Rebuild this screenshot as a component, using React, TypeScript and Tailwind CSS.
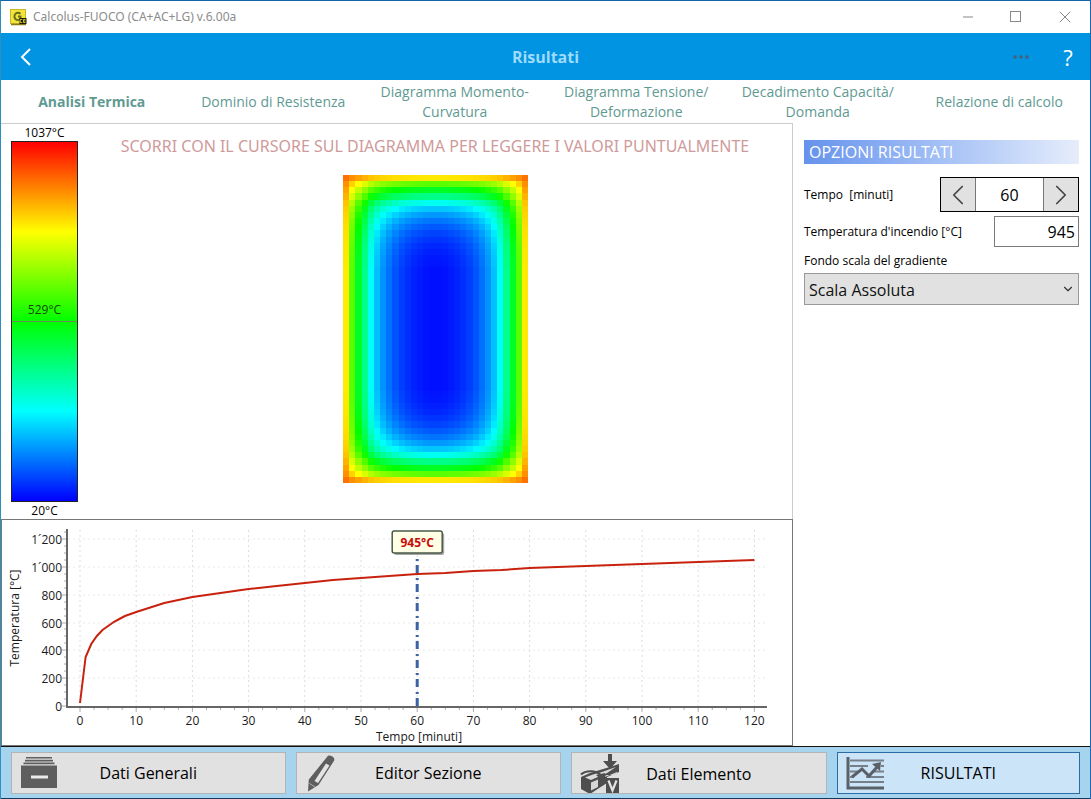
import React, { useState } from 'react';
import { Minus, Square, X, ChevronLeft, ChevronRight, ChevronDown } from 'lucide-react';
import clsx from 'clsx';

const TABS = [
  'Analisi Termica',
  'Dominio di Resistenza',
  'Diagramma Momento-Curvatura',
  'Diagramma Tensione/ Deformazione',
  'Decadimento Capacità/ Domanda',
  'Relazione di calcolo',
];

// ISO 834 standard fire curve
const fireTemp = (t: number) => 20 + 345 * Math.log10(8 * t + 1);

const AppIcon = () => (
  <svg width="17" height="17" viewBox="0 0 17 17" fill="none">
    <rect x="0.5" y="0.5" width="15" height="14" fill="#f3e33c" stroke="#c9b62a" />
    <path d="M1 15.500h15" stroke="#8a7a14" strokeWidth="1.500" />
    <path d="M10.500 4.800A3.600 3.600 0 1 0 10.500 10V7.500H8" stroke="#66701c" strokeWidth="2" />
    <rect x="9.500" y="9" width="7" height="6" fill="#1c1a08" />
    <path d="M12.300 10.500h-2v3h2M15.500 10.500h-2v3h2M13.500 12h2" stroke="#f3e33c" strokeWidth="0.800" />
  </svg>
);

const TitleBar: React.FC = () => (
  <div className="h-8 pl-[9px] flex items-center bg-white">
    <AppIcon />
    <h1 className="ml-[6px] flex-1 font-['Noto_Sans','Open_Sans',sans-serif] text-[12px] text-[#8c8c8c]">
      Calcolus-FUOCO (CA+AC+LG) v.6.00a
    </h1>
    <button aria-label="Riduci" className="w-12 h-full flex items-center justify-center text-[#888]">
      <Minus size={16} strokeWidth={1.5} />
    </button>
    <button aria-label="Ingrandisci" className="w-12 h-full flex items-center justify-center text-[#888]">
      <svg width="12" height="12" viewBox="0 0 12 12" fill="none" stroke="currentColor">
        <rect x="0.5" y="0.5" width="10" height="10" />
      </svg>
    </button>
    <button aria-label="Chiudi" className="w-[50px] h-full flex items-center justify-center text-[#888]">
      <X size={20} strokeWidth={1.2} />
    </button>
  </div>
);

const Header: React.FC = () => (
  <header className="h-[47px] bg-[#0094e2] grid grid-cols-[1fr_auto_1fr] items-center">
    <button aria-label="Indietro" className="w-[50px] h-full flex items-center justify-center text-white">
      <svg width="12" height="20" viewBox="0 0 12 20" fill="none" stroke="currentColor" strokeWidth="2">
        <path d="M10 2 2 10l8 8" />
      </svg>
    </button>
    <h2 className="text-[16px] font-bold text-[#9edbfc]">Risultati</h2>
    <div className="flex justify-end items-center h-full pr-3">
      <button aria-label="Altro" className="w-[46px] flex justify-start text-[#4a5f78]">
        <svg width="18" height="4" viewBox="0 0 18 4" fill="currentColor">
          <circle cx="3" cy="2" r="1.8" />
          <circle cx="9" cy="2" r="1.8" />
          <circle cx="15" cy="2" r="1.8" />
        </svg>
      </button>
      <button aria-label="Aiuto" className="w-[20px] text-[22px] leading-none font-medium text-white">?</button>
    </div>
  </header>
);

// gradient stops: blue, cyan, green, yellow, red
const heatColor = (f: number) => {
  const v = Math.max(0, Math.min(1, f)) * 4;
  const c = (n: number) => Math.round(n * 255);
  if (v < 1) return `rgb(0,${c(v)},255)`;
  if (v < 2) return `rgb(0,255,${c(2 - v)})`;
  if (v < 3) return `rgb(${c(v - 2)},255,0)`;
  return `rgb(255,${c(4 - v)},0)`;
};

const PROFILE = [0.77, 0.585, 0.46, 0.36, 0.255, 0.185, 0.14, 0.105, 0.078, 0.056, 0.04, 0.028, 0.02, 0.013, 0.01];
const COLS = 30;
const ROWS = 50;
const FIRE = 0.91;

const depth = (i: number, n: number) => (PROFILE[Math.min(i, n - 1 - i)] ?? 0.005) / FIRE;

const HeatMap: React.FC = () => (
  <svg width="185" height="308" viewBox="0 0 30 50" preserveAspectRatio="none" shapeRendering="crispEdges">
    {Array.from({ length: ROWS * COLS }, (_, k) => {
      const x = k % COLS;
      const y = Math.floor(k / COLS);
      const f = FIRE * (1 - (1 - depth(x, COLS)) * (1 - depth(y, ROWS)));
      return <rect key={k} x={x} y={y} width="1" height="1" fill={heatColor(f)} />;
    })}
  </svg>
);

const ScaleBar: React.FC = () => (
  <div className="w-[67px] flex flex-col items-center text-[12px] leading-[17px] text-black">
    <span>1037°C</span>
    <div className="w-full h-[361px] border border-[#222] flex flex-col bg-[linear-gradient(to_bottom,#f00,#ff0_25%,#0f0_50%,#0ff_75%,#00f)]">
      <div className="h-1/2 flex items-end justify-center border-b border-[#6b8a5a] pb-[3px] text-[#16480a]">529°C</div>
    </div>
    <span>20°C</span>
  </div>
);

const px = (t: number) => 78 + t * 5.62;
const py = (temp: number) => Math.round(186 - (temp / 1200) * 167);

const CURVE = [0, 1, 2, 3, 4, 5, 6, 7, 8, 9, 10, 15, 20, 25, 30, 35, 40, 45, 50, 55, 60, 65, 70, 75, 80, 85, 90, 95, 100, 105, 110, 115, 120];
const X_TICKS = Array.from({ length: 13 }, (_, i) => i * 10);
const Y_TICKS = [0, 200, 400, 600, 800, 1000, 1200];

const FireChart: React.FC<{ minutes: number }> = ({ minutes }) => {
  const cursor = px(minutes);
  return (
    <svg viewBox="0 0 790 225" className="w-full block text-[12px]" fill="#1a1a1a">
      <g stroke="#dcdcdc" strokeDasharray="2 3">
        {X_TICKS.map((t) => (
          <line key={t} x1={px(t)} x2={px(t)} y1="10" y2="186" />
        ))}
        {Y_TICKS.slice(1).map((v) => (
          <line key={v} x1="66" x2="765" y1={py(v)} y2={py(v)} stroke="#e9e9e9" />
        ))}
      </g>
      <g stroke="#aaa">
        {Array.from({ length: 49 }, (_, i) => (
          <line key={i} x1={px(i * 2.5)} x2={px(i * 2.5)} y1="187" y2={i % 4 ? 190 : 192} />
        ))}
        {Array.from({ length: 26 }, (_, i) => (
          <line key={i} x1={i % 4 ? 62 : 60} x2="65" y1={py(i * 50)} y2={py(i * 50)} />
        ))}
      </g>
      <path d="M65 9V187H765" fill="none" stroke="#666" strokeWidth="2" />
      {X_TICKS.map((t) => (
        <text key={t} x={px(t)} y="205" textAnchor="middle">{t}</text>
      ))}
      {Y_TICKS.map((v) => (
        <text key={v} x="60" y={py(v) + 5} textAnchor="end">
          {v >= 1000 ? `1´${String(v - 1000).padStart(3, '0')}` : v}
        </text>
      ))}
      <text x="417" y="221" textAnchor="middle">Tempo [minuti]</text>
      <text transform="translate(17 98) rotate(-90)" textAnchor="middle">Temperatura [°C]</text>
      <line x1={cursor} x2={cursor} y1="34" y2="186" stroke="#3a62a4" strokeWidth="3" strokeDasharray="8 5 2 4" strokeDashoffset="8" />
      <polyline
        points={CURVE.map((t) => `${px(t)},${py(fireTemp(t))}`).join(' ')}
        fill="none"
        stroke="#c8220e"
        strokeWidth="2"
      />
      <rect x={cursor - 23} y="13" width="50" height="22" rx="2" fill="#a8a8a8" />
      <rect x={cursor - 25} y="11" width="50" height="22" rx="2" fill="#ffffe6" stroke="#4a5a4a" strokeWidth="1.5" />
      <text x={cursor} y="27" textAnchor="middle" fontWeight="bold" fill="#c80a0a">
        {Math.round(fireTemp(minutes))}°C
      </text>
    </svg>
  );
};

const OptionsPanel: React.FC<{ minutes: number; setMinutes: (m: number) => void }> = ({ minutes, setMinutes }) => {
  const step = (d: number) => setMinutes(Math.max(0, Math.min(120, minutes + d)));
  return (
    <aside className="w-[297px] shrink-0 pl-[11px] pr-[11px] pt-[17px] flex flex-col text-[12px] text-black">
      <h3 className="h-6 pl-[5px] flex items-center text-[16px] text-white bg-gradient-to-r from-[#6592ec] to-[#e6edfb]">
        OPZIONI RISULTATI
      </h3>
      <div className="mt-[13px] flex items-center justify-between">
        <label htmlFor="tempo" className="whitespace-pre">{'Tempo  [minuti]'}</label>
        <div className="flex h-[35px] w-[139px] border border-black">
          <button aria-label="Diminuisci" onClick={() => step(-5)} className="w-[35px] bg-[#e1e1e1] border-r border-[#777] flex items-center justify-center text-[#444]">
            <ChevronLeft size={34} strokeWidth={1.2} />
          </button>
          <input
            id="tempo"
            value={minutes}
            onChange={(e) => setMinutes(Math.min(120, parseInt(e.target.value) || 0))}
            className="min-w-0 flex-1 pt-px text-center text-[16px] outline-none"
          />
          <button aria-label="Aumenta" onClick={() => step(5)} className="w-[35px] bg-[#e1e1e1] border-l border-[#777] flex items-center justify-center text-[#444]">
            <ChevronRight size={34} strokeWidth={1.2} />
          </button>
        </div>
      </div>
      <div className="mt-1 flex items-center justify-between">
        <label htmlFor="temperatura">Temperatura d'incendio [°C]</label>
        <input
          id="temperatura"
          readOnly
          value={Math.round(fireTemp(minutes))}
          className="w-[85px] h-[31px] border border-[#7a7a7a] px-[3px] pt-px text-right text-[16px] outline-none"
        />
      </div>
      <label htmlFor="scala" className="mt-[5px] leading-[18px]">Fondo scala del gradiente</label>
      <div className="mt-[3px] grid items-center">
        <select
          id="scala"
          className="col-start-1 row-start-1 h-8 w-full appearance-none bg-[#e1e1e1] border border-[#999] pl-1 pt-px text-[16px] text-[#111] outline-none"
        >
          <option>Scala Assoluta</option>
          <option>Scala Relativa</option>
        </select>
        <ChevronDown size={14} strokeWidth={2} className="col-start-1 row-start-1 justify-self-end mr-1 pointer-events-none text-[#333]" />
      </div>
    </aside>
  );
};

const DrawerIcon = () => (
  <svg width="38" height="34" viewBox="0 0 38 34" fill="#5e5e5e">
    <path d="M6 1h26v1.6H6zM5 3.8h28v1.6H5zM3.500 6.600h31v1.600h-31zM1 9.500h36V32H1z" />
    <rect x="11" y="19.500" width="17" height="3" fill="#eaeaea" />
  </svg>
);

const PencilIcon = () => (
  <svg width="38" height="38" viewBox="0 0 38 38" fill="#5e5e5e">
    <path d="M22 3c1-1.700 3-1.900 5-.8s2.800 2.700 2 4.600L13.500 31 3 37.500l.8-12z" />
    <path d="M21 9.500 9.500 27l3.500 2L24.500 11.500z" fill="#e4e4e4" />
    <path d="M4.500 29.500 10 33" stroke="#b5b5b5" strokeWidth="1" />
  </svg>
);

const BeamIcon = () => (
  <svg width="40" height="42" viewBox="0 0 40 42" fill="#4e4e4e">
    <path d="M28 1h4v7h5l-7 8-7-8h5z" />
    <path d="M1 24 10 20 33 13l6-2v8l-12 5v6L10 41 1 36z" />
    <path d="M5 24.500 13 21.500 22 19l14-5-9 6-16 7z" fill="#dcdcdc" />
    <path d="M11 29.500 18 26.500v7.500l-7 3.500zM25 24l12-5v3H26z" fill="#d6d6d6" />
    <path d="M1 21.500c4-4 15-5 20 1" stroke="#4e4e4e" strokeWidth="2.200" fill="none" />
    <path d="m16 22 8 7 1-9z" />
    <path d="M17 36.500 26 32.500v5z" fill="#dcdcdc" />
    <rect x="26" y="25" width="13" height="15" />
    <path d="m28.500 27.500 4 10 4-10" fill="none" stroke="#e4e4e4" strokeWidth="2.200" />
  </svg>
);

const ResultsIcon = () => (
  <svg width="38" height="34" viewBox="0 0 38 34" fill="none" stroke="#5a6068">
    <path d="M2 1v31h36" strokeWidth="3" />
    <path d="M4 4.500h34M4 10h18M35 10h3M4 15.500h8M27 15.500h11M4 21h4M20 21h18M4 26h34" stroke="#777f88" strokeWidth="1.800" />
    <path d="m6 21 10-8 7 7 9-10" strokeWidth="3" />
    <path d="m26 8 9-2-1 9z" fill="#5a6068" stroke="none" />
  </svg>
);

const NAV = [
  { label: 'Dati Generali', icon: <DrawerIcon /> },
  { label: 'Editor Sezione', icon: <PencilIcon /> },
  { label: 'Dati Elemento', icon: <BeamIcon /> },
  { label: 'RISULTATI', icon: <ResultsIcon />, active: true },
];

export default function App() {
  const [minutes, setMinutes] = useState(60);
  const [tab, setTab] = useState(0);

  return (
    <div className="min-h-screen flex flex-col bg-white border-t border-l border-r border-t-[#1464a8] border-l-[#2c8fbd] border-r-[#1668b8] font-['Open_Sans','Noto_Sans',sans-serif]">
      <TitleBar />
      <Header />
      <nav className="h-[43px] grid grid-cols-6 items-center">
        {TABS.map((label, i) => (
          <button
            key={label}
            onClick={() => setTab(i)}
            className={clsx('px-3 text-[14px] leading-5 text-[#5f9a92]', tab === i && 'font-bold')}
          >
            {label}
          </button>
        ))}
      </nav>
      <main className="flex-1 flex">
        <div className="flex-1 min-w-0 flex flex-col">
          <section className="flex-1 flex pl-[10px] border-t border-r border-[#ccc]">
            <ScaleBar />
            <div className="flex-1 flex flex-col items-center pt-[10px]">
              <p className="font-['Noto_Sans','Open_Sans',sans-serif] text-[16px] leading-6 text-[#cf9a9a]">
                SCORRI CON IL CURSORE SUL DIAGRAMMA PER LEGGERE I VALORI PUNTUALMENTE
              </p>
              <div className="mt-[17px]">
                <HeatMap />
              </div>
            </div>
          </section>
          <section className="border border-[#777]">
            <FireChart minutes={minutes} />
          </section>
        </div>
        <OptionsPanel minutes={minutes} setMinutes={setMinutes} />
      </main>
      <footer className="border-t border-b border-t-[#111] border-b-[#123a5c] bg-[#a6d4ee] px-[10px] pt-[5px] pb-1 grid grid-cols-[274fr_265fr_255fr_243fr] gap-[10px]">
        {NAV.map(({ label, icon, active }) => (
          <button
            key={label}
            className={clsx(
              'h-[42px] border grid grid-cols-[48px_1fr_48px] items-center text-[16px] text-black overflow-hidden',
              active ? 'bg-[#cce4f7] border-[#2a6ca5]' : 'bg-[#e1e1e1] border-[#b4b4b4]',
            )}
          >
            <span className="pl-2">{icon}</span>
            <span>{label}</span>
          </button>
        ))}
      </footer>
    </div>
  );
}
